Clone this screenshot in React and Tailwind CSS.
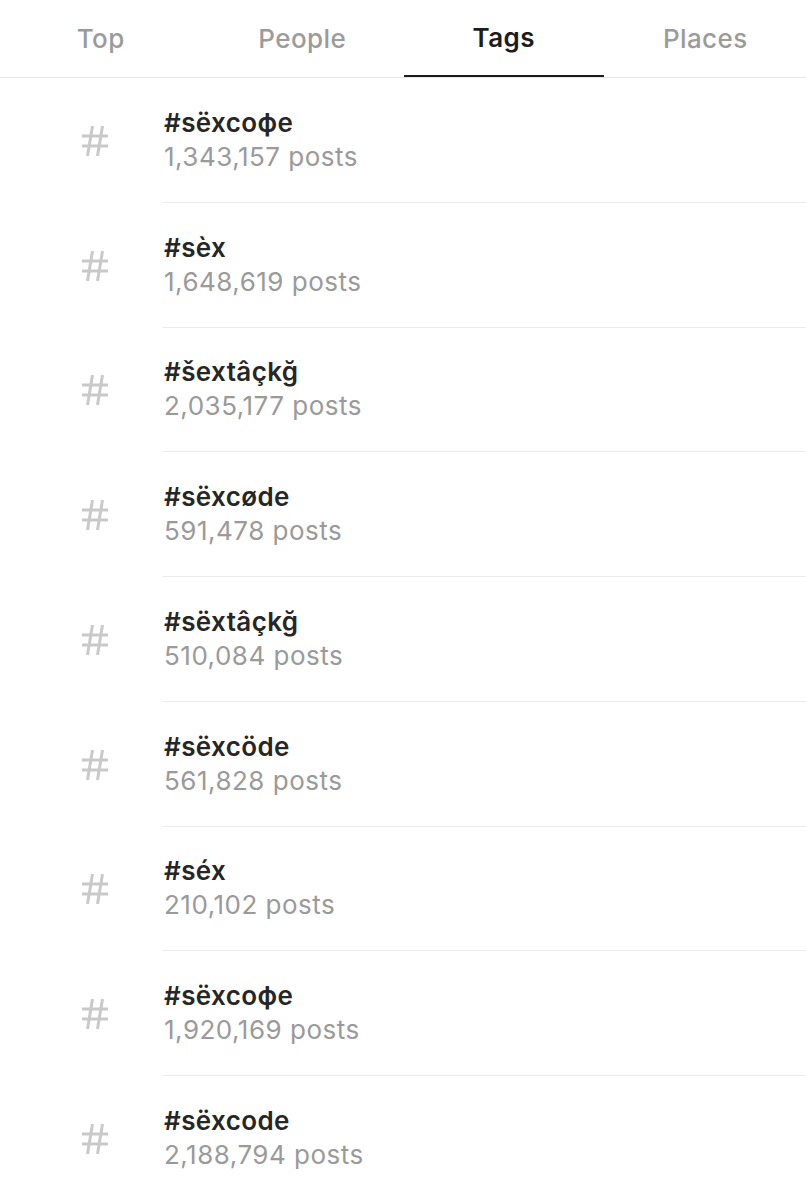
import React from "react";

const tabs = ["Top", "People", "Tags", "Places"];

const tags = [
  { name: "#sëxcoфe", posts: "1,343,157" },
  { name: "#sèx", posts: "1,648,619" },
  { name: "#šextâçkğ", posts: "2,035,177" },
  { name: "#sëxcøde", posts: "591,478" },
  { name: "#sëxtâçkğ", posts: "510,084" },
  { name: "#sëxcöde", posts: "561,828" },
  { name: "#séx", posts: "210,102" },
  { name: "#sëxcoфe", posts: "1,920,169" },
  { name: "#sëxcode", posts: "2,188,794" },
];

function HashIcon() {
  return (
    <svg width="26" height="30" viewBox="0 0 26 30" fill="none" stroke="#c9c9c9" strokeWidth="3">
      <line x1="10.5" y1="0" x2="5.5" y2="30" />
      <line x1="20.5" y1="0" x2="15.5" y2="30" />
      <line x1="0" y1="10" x2="26" y2="10" />
      <line x1="0" y1="20" x2="26" y2="20" />
    </svg>
  );
}

export default function App() {
  return (
    <div className="w-[806px] bg-white" style={{ fontFamily: "Inter, 'Noto Sans', sans-serif" }}>
      {/* Tabs */}
      <div className="grid grid-cols-4 h-[78px] border-b border-[#e6e6e6]">
        {tabs.map((t) => (
          <div
            key={t}
            className={`flex items-center justify-center text-[26px] tracking-[0.4px] ${
              t === "Tags"
                ? "font-semibold text-[#1c1c1c] border-b-2 border-[#1c1c1c] mx-[1px]"
                : "font-medium text-[#9b9b9b]"
            }`}
          >
            {t}
          </div>
        ))}
      </div>

      {/* Tag list */}
      {tags.map((tag, i) => (
        <div key={i} className="flex h-[124.75px]">
          <div className="w-[163px] flex-shrink-0 flex items-center pl-[82px] pt-[1px]">
            <HashIcon />
          </div>
          <div className="flex-1 flex flex-col justify-center border-b border-[#ebebeb] pl-[1px]">
            <div className="text-[26px] font-semibold leading-[34px] tracking-[0.4px] text-[#262626]">{tag.name}</div>
            <div className="text-[26px] leading-[34px] tracking-[0.5px] text-[#9a9a9a]">{tag.posts} posts</div>
          </div>
        </div>
      ))}
    </div>
  );
}
